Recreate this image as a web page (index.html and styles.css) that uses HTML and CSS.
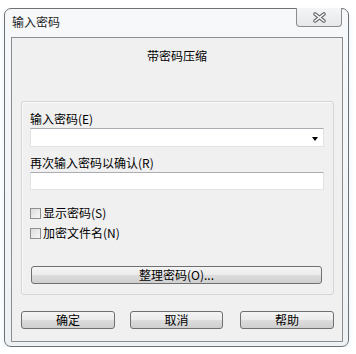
FILE: index.html
```html
<!DOCTYPE html>
<html lang="zh-CN">
<head>
    <meta charset="UTF-8">
    <title>输入密码</title>
    <link rel="stylesheet" href="styles.css">
</head>
<body>
<div class="window">
    <div class="titleBar">
        <span class="title">输入密码</span>
        <div class="closeBtn">
            <svg width="13" height="11" viewBox="0 0 13 11">
                <path d="M2 2 L11 9 M11 2 L2 9" stroke="#6a6a6a" stroke-width="3.6" stroke-linecap="round"/>
                <path d="M2 2 L11 9 M11 2 L2 9" stroke="#ffffff" stroke-width="1.5" stroke-linecap="round"/>
            </svg>
        </div>
    </div>
    <div class="client">
        <div class="header">带密码压缩</div>
        <div class="group">
            <label class="fieldLabel">输入密码(E)</label>
            <div class="combo">
                <span class="arrow"></span>
            </div>
            <label class="fieldLabel second">再次输入密码以确认(R)</label>
            <div class="textBox"></div>
            <div class="check first"><span class="box"></span>显示密码(S)</div>
            <div class="check"><span class="box"></span>加密文件名(N)</div>
            <div class="button wide">整理密码(O)...</div>
        </div>
        <div class="buttonRow">
            <div class="button ok">确定</div>
            <div class="button cancel">取消</div>
            <div class="button help">帮助</div>
        </div>
    </div>
</div>
</body>
</html>
```

FILE: styles.css
```css
* {
    box-sizing: border-box;
}

body {
    margin: 0;
    background: #fff;
    font-family: "Noto Sans CJK SC", "Liberation Sans", sans-serif;
    font-size: 12px;
    color: #000;
}

.window {
    margin: 8px 0 0 4px;
    width: 345px;
    height: 339px;
    border: 1px solid #6f7274;
    border-radius: 7px;
    background: linear-gradient(#f7f8fa, #eef1f4);
    padding: 0 5px 4px 6px;
    display: flex;
    flex-direction: column;
    box-shadow: 0 3px 5px rgba(170, 205, 230, 0.35);
}

.titleBar {
    height: 28px;
    display: flex;
    justify-content: space-between;
    align-items: flex-start;
}

.title {
    margin: 5px 0 0 1px;
    line-height: 16px;
    color: #1e1e1e;
}

.closeBtn {
    margin: -1px 1px 0 0;
    width: 46px;
    height: 19px;
    border: 1px solid #8a8c8e;
    border-top: none;
    border-radius: 0 0 4px 4px;
    background: linear-gradient(#f4f5f6, #e6e8ea);
    display: flex;
    align-items: center;
    justify-content: center;
}

.client {
    flex: 1;
    border: 1px solid #8b8d8f;
    background: #f0f0f0;
    padding-top: 10px;
}

.header {
    text-align: center;
    line-height: 16px;
}

.group {
    margin: 37px 0 0 9px;
    width: 313px;
    height: 194px;
    border: 1px solid #d5d5d5;
    border-radius: 3px;
    box-shadow: inset 1px 1px 0 #fbfbfb;
    padding: 9px 0 0 8px;
}

.fieldLabel {
    display: block;
    line-height: 16px;
}

.fieldLabel.second {
    margin-top: 8px;
}

.combo {
    margin-top: 1px;
    width: 294px;
    height: 19px;
    background: #fff;
    border: 1px solid #e2e3e5;
    border-top-color: #abadb3;
    position: relative;
}

.arrow {
    position: absolute;
    right: 5px;
    top: 8px;
    border-left: 3.5px solid transparent;
    border-right: 3.5px solid transparent;
    border-top: 4px solid #000;
}

.textBox {
    margin-top: 1px;
    width: 294px;
    height: 18px;
    background: #fff;
    border: 1px solid #e2e3e5;
    border-top-color: #abadb3;
}

.check {
    display: flex;
    align-items: center;
    line-height: 16px;
    margin-top: 4px;
}

.check.first {
    margin-top: 15px;
}

.box {
    width: 11px;
    height: 11px;
    margin-right: 2px;
    border: 1px solid #8f8f8f;
    background: linear-gradient(135deg, #dcdcdc, #f6f6f6);
}

.button {
    height: 18px;
    border: 1px solid #707070;
    border-radius: 3px;
    background: linear-gradient(#f4f4f4 0%, #ebebeb 50%, #dddddd 51%, #cfcfcf 100%);
    display: flex;
    align-items: center;
    justify-content: center;
    line-height: 16px;
}

.button.wide {
    margin: 25px 0 0 1px;
    width: 291px;
}

.buttonRow {
    margin: 16px 0 0 9px;
    display: flex;
}

.ok {
    width: 94px;
}

.cancel {
    width: 93px;
    margin-left: 15px;
}

.help {
    width: 94px;
    margin-left: 17px;
}
```
